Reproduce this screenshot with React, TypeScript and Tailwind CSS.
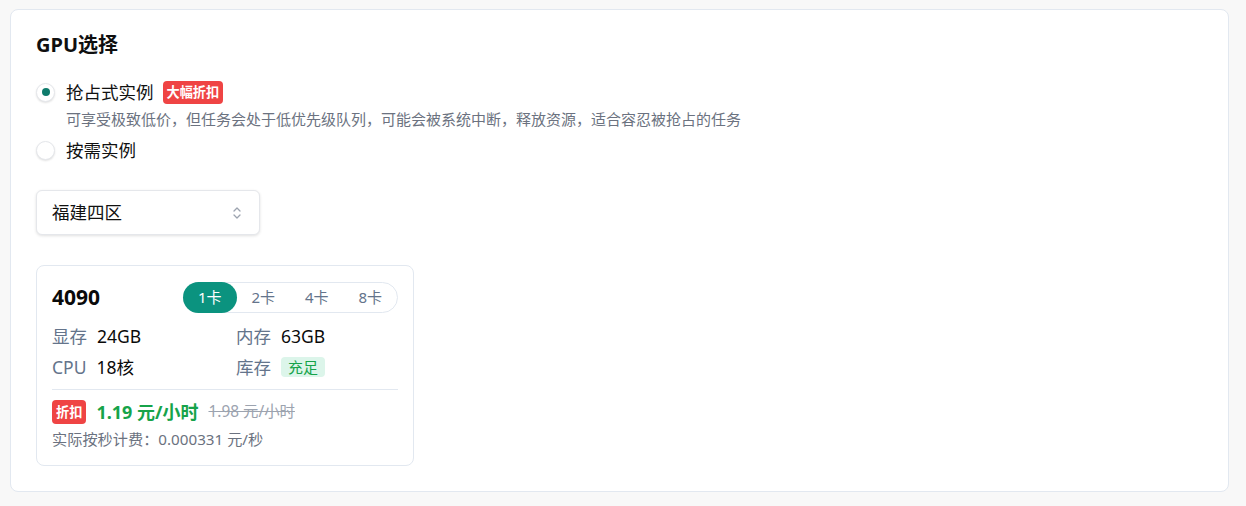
import { useState } from "react";

const font = { fontFamily: '"Noto Sans", "Noto Sans CJK SC", sans-serif' };

type Mode = "spot" | "ondemand";

function Radio({ checked }: { checked: boolean }) {
  return (
    <span className="flex h-[19px] w-[19px] items-center justify-center rounded-full border border-[#e5e7eb] bg-white shadow-[0_1px_2px_rgba(0,0,0,0.12)]">
      {checked && <span className="h-[8px] w-[8px] rounded-full bg-[#0f7b6c]" />}
    </span>
  );
}

function Spec({ label, children, wide }: { label: string; children: React.ReactNode; wide?: boolean }) {
  return (
    <div className={wide ? "flex h-[28px] w-[184px] shrink-0 items-center gap-[10px] text-[17.5px]" : "flex h-[28px] flex-1 items-center gap-[10px] text-[17.5px]"}>
      <span className="text-[#64748b]">{label}</span>
      {children}
    </div>
  );
}

export default function App() {
  const [mode, setMode] = useState<Mode>("spot");
  const [cards, setCards] = useState(1);

  return (
    <div style={font} className="min-h-[506px] bg-[#f8f8f8] pl-[10px] pr-[17px] pt-[9px] pb-[14px]">
      <div className="rounded-[8px] border border-[#e2e8f0] bg-white px-[25px] pt-[21px] pb-[25px]">
        <h2 className="text-[20px] font-bold leading-[28px] text-[#0f0f0f]">GPU选择</h2>

        {/* instance type */}
        <div className="mt-[21px]">
          <button className="flex h-6 items-center" onClick={() => setMode("spot")}>
            <Radio checked={mode === "spot"} />
            <span className="ml-[11px] text-[17.5px] leading-6 text-[#111]">抢占式实例</span>
            <span className="ml-[9px] rounded-[4px] bg-[#ef4444] px-[4px] text-[13.2px] font-bold leading-[23px] text-white">
              大幅折扣
            </span>
          </button>
          <p className="mt-[4px] pl-[30px] text-[15px] leading-[22px] text-[#6b7280]">
            可享受极致低价，但任务会处于低优先级队列，可能会被系统中断，释放资源，适合容忍被抢占的任务
          </p>
          <button className="mt-[8px] flex h-6 items-center" onClick={() => setMode("ondemand")}>
            <Radio checked={mode === "ondemand"} />
            <span className="ml-[11px] text-[17.5px] leading-6 text-[#111]">按需实例</span>
          </button>
        </div>

        {/* region */}
        <button className="mt-[28px] flex h-[45px] w-[224px] items-center justify-between rounded-[6px] border border-[#e5e7eb] bg-white pl-[15px] pr-[16px] shadow-[0_1px_3px_rgba(0,0,0,0.12)]">
          <span className="text-[17.5px] text-[#111]">福建四区</span>
          <svg width="12" height="14" viewBox="0 0 12 14" fill="none" stroke="#9ca3af" strokeWidth="1.3" strokeLinecap="round" strokeLinejoin="round">
            <path d="M3 5l3-3 3 3" />
            <path d="M3 9l3 3 3-3" />
          </svg>
        </button>

        {/* gpu card */}
        <div className="mt-[30px] w-[378px] rounded-[8px] border border-[#e2e8f0] bg-white px-[15px] pt-[16px] pb-[16px]">
          <div className="flex h-[31px] items-center justify-between">
            <span className="text-[21px] font-bold text-[#0a0a0a]">4090</span>
            <div className="flex h-[31px] w-[215px] items-center rounded-full border border-[#e2e8f0]">
              {[1, 2, 4, 8].map((n) => (
                <button
                  key={n}
                  onClick={() => setCards(n)}
                  className={
                    n === cards
                      ? "-ml-px h-[31px] flex-1 rounded-full bg-[#0b937f] text-[15px] text-white"
                      : "h-[31px] flex-1 text-[15px] text-[#64748b]"
                  }
                >
                  {n}卡
                </button>
              ))}
            </div>
          </div>

          <div className="mt-[9px] flex flex-col gap-[3px]">
            <div className="flex">
              <Spec label="显存" wide><span className="text-[#0a0a0a]">24GB</span></Spec>
              <Spec label="内存"><span className="text-[#0a0a0a]">63GB</span></Spec>
            </div>
            <div className="flex">
              <Spec label="CPU" wide><span className="text-[#0a0a0a]">18核</span></Spec>
              <Spec label="库存">
                <span className="rounded-[4px] bg-[#dcf5ea] px-[7px] text-[15px] leading-[20px] text-[#16a34a]">充足</span>
              </Spec>
            </div>
          </div>

          <div className="mt-[8px] h-px bg-[#e2e8f0]" />

          <div className="mt-[10px] flex h-[24px] items-center">
            <span className="rounded-[4px] bg-[#ef4444] px-[4px] text-[13.2px] font-bold leading-[24px] text-white">折扣</span>
            <span className="ml-[10px] text-[18px] font-bold text-[#16a34a]">1.19 元/小时</span>
            <span className="ml-[10px] text-[15.4px] text-[#9ca3af] line-through">1.98 元/小时</span>
          </div>
          <p className="mt-[5px] text-[15.2px] leading-5 text-[#6b7280]">实际按秒计费：0.000331 元/秒</p>
        </div>
      </div>
    </div>
  );
}
